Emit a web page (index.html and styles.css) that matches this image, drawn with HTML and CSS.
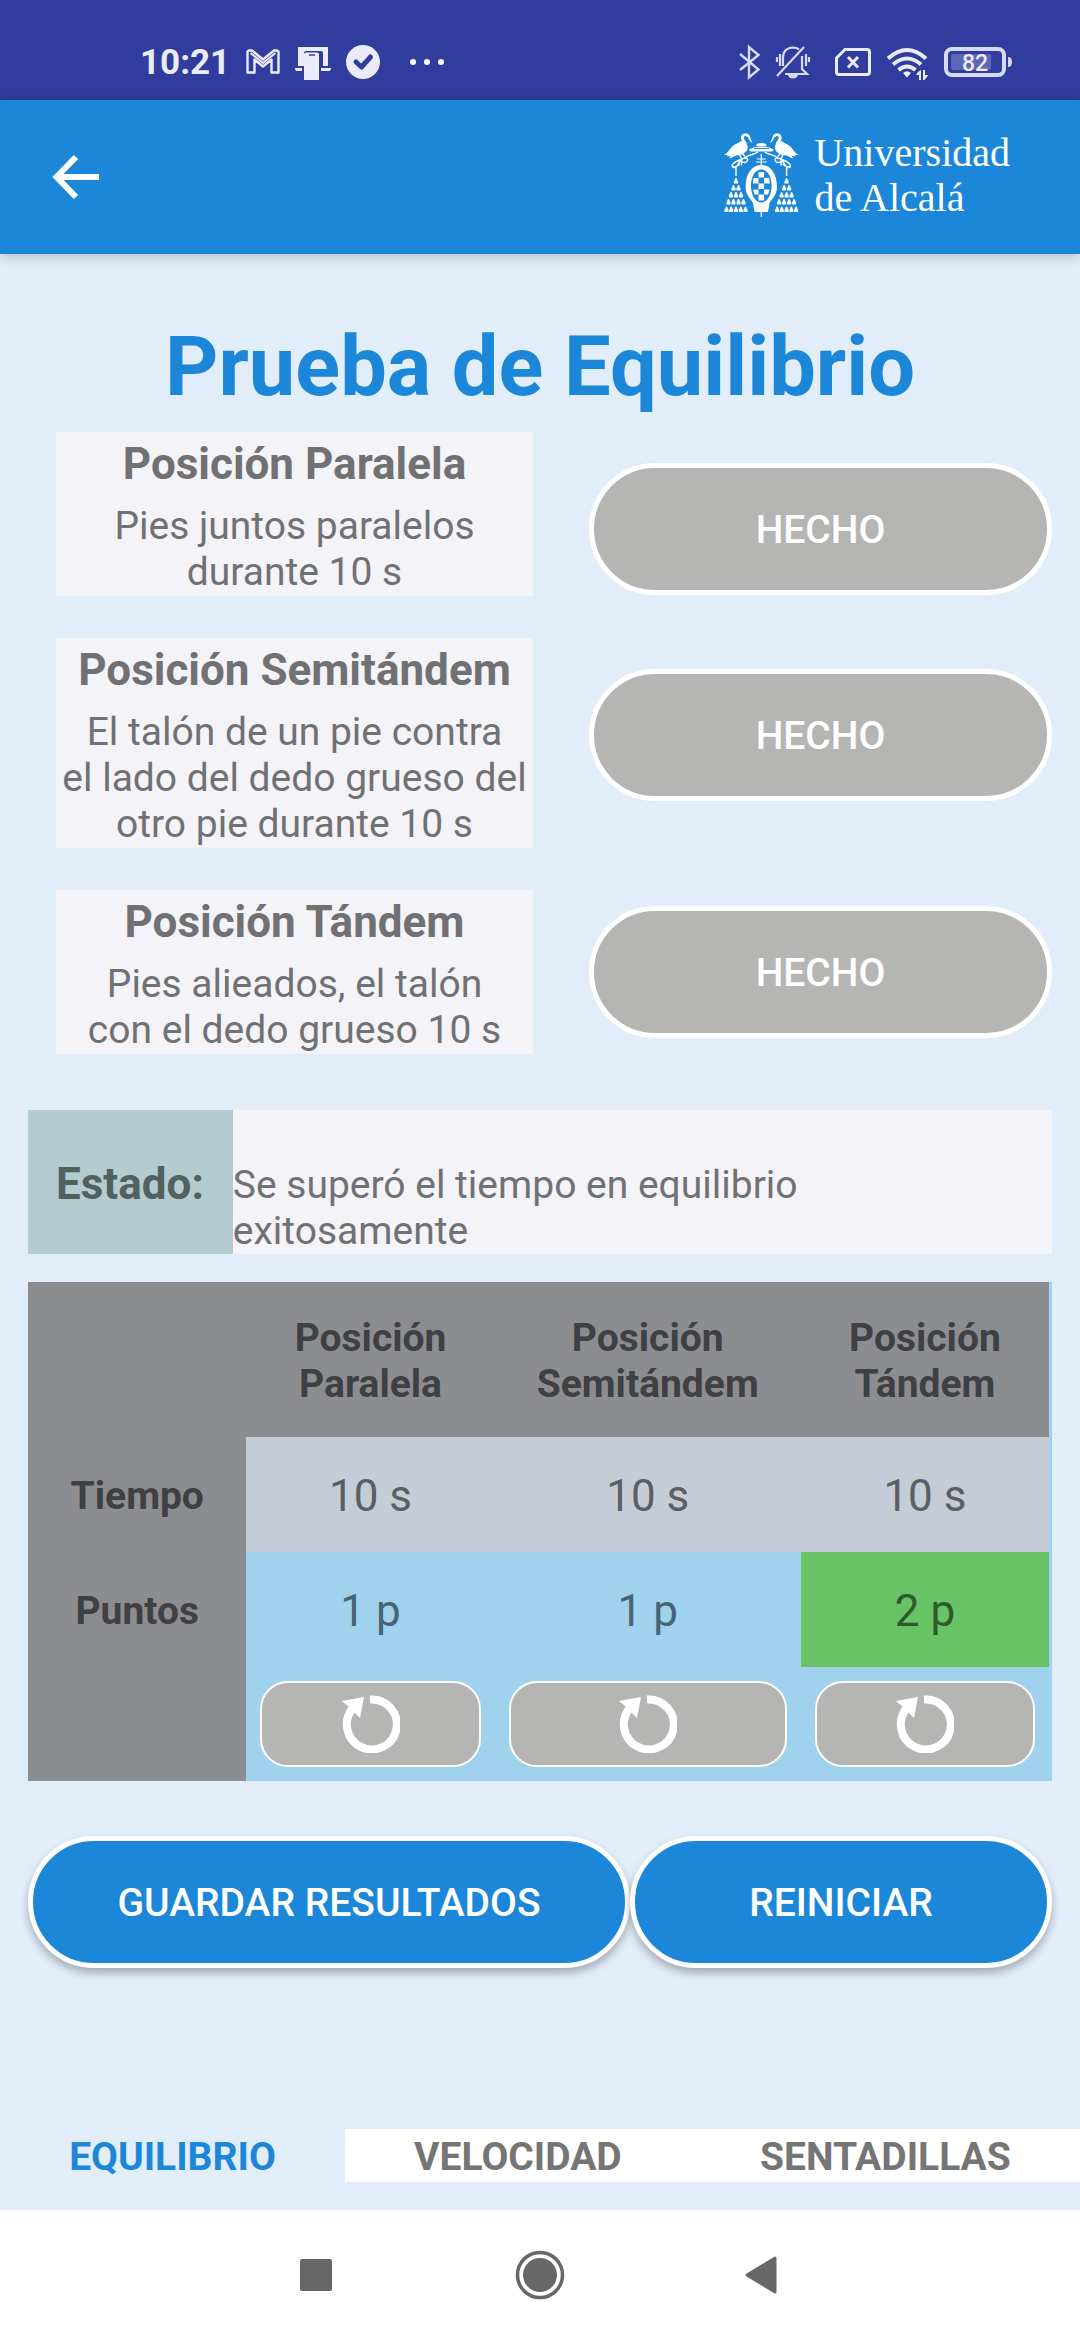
FILE: index.html
```html
<!DOCTYPE html>
<html lang="es">
<head>
<meta charset="utf-8">
<meta name="viewport" content="width=device-width, initial-scale=1">
<title>Prueba de Equilibrio</title>
<link rel="stylesheet" href="styles.css">
</head>
<body>
<svg width="0" height="0" class="defs" aria-hidden="true">
  <defs>
    <g id="tassel"><path d="M0 0c1 0 1 1.500 1.300 2.300c.9.300 1 2.700.6 3.200h-3.800c-.4-.5-.3-2.900.6-3.200C-1 1.500-1 0 0 0z"/></g>
    <g id="crest-half">
      <path d="M1.800 25c4-1.500 5-5 8.500-8.500c3-3 6.500-3.500 9-5.500c2.500 1 5.500 2 6.500 5.500c.3 3.500-2.500 6.500-6 8c-2.500 1-5 .5-7.500 1.800c-1.800 1-2.800 1.700-4.800 2.200l1.300-2.700c-2 .8-3 .5-4 .5l1-1.200z"/>
      <path d="M24 14c-2-2.500-4.500-4-3.500-7.300c1-2.700 5-2.700 6-.2" fill="none" stroke="#fff" stroke-width="2.800"/>
      <path d="M25 4.500c2 0 3 1.500 3.300 3.300l2.200 5.200c-2-1-4-3.500-4.600-6.500z"/>
      <path d="M17 24l2.500 4.500v7M20 23l3 3.500M14 46V36M36 22c-5 3-7 2-12 5s-9 3.500-12 6s-2 5 .5 4.500s3.500-3 4.500-5s4-5 7-4.500s1.500 4-1 4.500s-5-2.500-7.500-1.500M18 34c-2 1-4 4-7 2.500" fill="none" stroke="#fff" stroke-width="1.400"/>
      <use href="#tassel" x="14" y="48"/>
      <use href="#tassel" x="11.500" y="55"/><use href="#tassel" x="16.500" y="55"/>
      <use href="#tassel" x="9" y="62"/><use href="#tassel" x="14" y="62"/><use href="#tassel" x="19" y="62"/>
      <use href="#tassel" x="6.500" y="69"/><use href="#tassel" x="11.500" y="69"/><use href="#tassel" x="16.500" y="69"/><use href="#tassel" x="21.500" y="69"/>
      <use href="#tassel" x="4.500" y="76.500"/><use href="#tassel" x="9.200" y="76.500"/><use href="#tassel" x="14" y="76.500"/><use href="#tassel" x="18.800" y="76.500"/><use href="#tassel" x="23.500" y="76.500"/>
    </g>
    <symbol id="redo" viewBox="0 0 58 58">
      <path d="M28 4.500A25 25 0 1 1 11 13" fill="none" stroke="#fff" stroke-width="8"/>
      <path d="M0 6L22 2L18 23L12 17L5 20L7 12z" fill="#fff"/>
    </symbol>
  </defs>
</svg>

<div class="screen">
  <div class="status">
    <span class="clock">10:21</span>
    <svg class="status-left" viewBox="244 43 202 38" width="202" height="38" aria-hidden="true">
      <path d="M249 50.500h3l11 9l11-9h3l1.500 1v21h-7V59.500l-8.500 7l-8.500-7v13h-7v-21z" fill="none" stroke="#ecebfa" stroke-width="2.400" stroke-linejoin="round"/>
      <path d="M250.500 53l12.500 10l12.500-10" fill="none" stroke="#ecebfa" stroke-width="2"/>
      <path d="M298 47h30v19h-5V53q0-2-2-2h-15q-2 0-2 2v13h-6zM295 68h7v3h-5q-2 0-2-3zM321 68h10q0 3-2 3h-8zM304 54q0-1.500 2-1.500h11q2 0 2 1.500v26h-15z" fill="#ecebfa"/>
      <path d="M309 55h6" stroke="#303d9e" stroke-width="1.500"/>
      <circle cx="363" cy="62" r="17" fill="#ecebfa"/>
      <path d="M356 62l5.500 5l9-10" fill="none" stroke="#303d9e" stroke-width="5" stroke-linecap="round" stroke-linejoin="round"/>
      <g fill="#fff"><circle cx="413" cy="62" r="3"/><circle cx="427" cy="62" r="3"/><circle cx="441" cy="62" r="3"/></g>
    </svg>
    <svg class="status-right" viewBox="738 43 276 38" width="276" height="38" role="img" aria-label="Batería 82">
      <path d="M740 54l18.500 15.500l-9.500 8V47l9.500 8L740 70" fill="none" stroke="#d8daf4" stroke-width="2.400"/>
      <g fill="none" stroke="#d8daf4" stroke-width="2.200">
        <path d="M783 66V58q0-10 10-10.500q4 0 6 2M802 56v13l5 5h-22M777 76l27-29M780 54v12M777 57v5M806 54v12M809 57v5"/>
      </g>
      <path d="M788 75h10q-1 3.500-5 3.500t-5-3.500z" fill="#d8daf4"/>
      <path d="M845 49.500h22q2.500 0 2.500 2.500v20q0 2.500-2.500 2.500h-28q-2.500 0-2.500-2.500V58zM848 57l10 10.500M858 57l-10 10.500" fill="none" stroke="#ecebfa" stroke-width="3"/>
      <path d="M888 58.500q19-17 38 0M893 64.500q14-12 28 0M898.500 70q8.500-7 17 0" fill="none" stroke="#ecebfa" stroke-width="4"/>
      <path d="M907 77.500l-4-4.500q4-3.500 8 0zM918 72l3-2v10h-2v-5h-3zM923 70h2v5h3.500l-4 5H923z" fill="#ecebfa"/>
      <rect x="946" y="49" width="58" height="26" rx="6" fill="none" stroke="#d8daf4" stroke-width="4"/>
      <rect x="951" y="54" width="40" height="16" rx="2" fill="#5c66b4"/>
      <path d="M1008 57q4 0 4 5t-4 5z" fill="#d8daf4"/>
      <text x="975" y="71" text-anchor="middle" class="battery-text">82</text>
    </svg>
  </div>

  <header class="appbar">
    <button class="back" aria-label="Volver">
      <svg viewBox="0 0 48 48" width="48" height="48"><path d="M47 24H6M24 4L4.500 24L24 44" fill="none" stroke="#fff" stroke-width="6"/></svg>
    </button>
    <div class="brand">
      <svg viewBox="0 0 80 90" width="80" height="90" fill="#fff" aria-hidden="true">
        <use href="#crest-half"/>
        <use href="#crest-half" transform="translate(78.600 0) scale(-1 1)"/>
        <path d="M34 16q0-3 5.300-3t5.300 3zM27 19.500q5-3 12.300-3t12.300 3q0 2-3 2H30q-3 0-3-2z"/>
        <path d="M32 18.500h15" stroke="#1c87d9" stroke-width="1"/>
        <path d="M39.300 24v12M35 29h8.600M34 32h10.600M39.300 80v7" stroke="#fff" stroke-width="1.200"/>
        <path fill-rule="evenodd" d="M39.300 35C49 35 55 44 55 57c0 9-6 12-7.500 16.500L46 82H32.600l-1.500-8.500C29.600 69 23.600 66 23.600 57c0-13 6-22 15.700-22zm0 4.500c-6 0-10.300 6.500-10.300 16.500s5 16.500 10.300 16.500S49.600 66 49.600 56s-4.300-16.500-10.300-16.500z"/>
        <path d="M36.500 42h5.600v5.500h-5.600zM36.500 53.500h5.600V59h-5.600zM36.500 64.500h5.600v6h-5.600zM31.500 48h5v5.500h-5.700zM42.100 48h5l.8 5.500h-5.800zM31 59.500h5.500v5h-4zM42.100 59.500h5.500l-1.500 5h-4z"/>
      </svg>
      <span class="brand-name">Universidad<br>de Alcalá</span>
    </div>
  </header>

  <main class="content">
    <h1>Prueba de Equilibrio</h1>

    <div class="tests">
      <section class="test">
        <div class="card"><h2>Posición Paralela</h2><p>Pies juntos paralelos<br>durante 10 s</p></div>
        <button class="pill done">HECHO</button>
      </section>
      <section class="test">
        <div class="card"><h2>Posición Semitándem</h2><p>El talón de un pie contra<br>el lado del dedo grueso del<br>otro pie durante 10 s</p></div>
        <button class="pill done">HECHO</button>
      </section>
      <section class="test centered">
        <div class="card"><h2>Posición Tándem</h2><p>Pies alieados, el talón<br>con el dedo grueso 10 s</p></div>
        <button class="pill done">HECHO</button>
      </section>
    </div>

    <div class="state">
      <strong class="state-label">Estado:</strong>
      <p class="state-text">Se superó el tiempo en equilibrio<br>exitosamente</p>
    </div>

    <table class="results">
      <colgroup><col class="col-label"><col class="col-side"><col class="col-mid"><col class="col-side"></colgroup>
      <thead>
        <tr><td></td><th scope="col">Posición<br>Paralela</th><th scope="col">Posición<br>Semitándem</th><th scope="col">Posición<br>Tándem</th></tr>
      </thead>
      <tbody>
        <tr class="time"><th scope="row">Tiempo</th><td>10 s</td><td>10 s</td><td>10 s</td></tr>
        <tr class="points"><th scope="row">Puntos</th><td>1 p</td><td>1 p</td><td class="best">2 p</td></tr>
        <tr class="actions">
          <th></th>
          <td><button class="redo" aria-label="Repetir Posición Paralela"><svg width="58" height="58"><use href="#redo"/></svg></button></td>
          <td><button class="redo" aria-label="Repetir Posición Semitándem"><svg width="58" height="58"><use href="#redo"/></svg></button></td>
          <td><button class="redo" aria-label="Repetir Posición Tándem"><svg width="58" height="58"><use href="#redo"/></svg></button></td>
        </tr>
      </tbody>
    </table>

    <div class="main-actions">
      <button class="pill primary save">GUARDAR RESULTADOS</button>
      <button class="pill primary reset">REINICIAR</button>
    </div>
  </main>

  <nav class="tabs">
    <a class="tab active" href="#equilibrio" aria-current="page">EQUILIBRIO</a>
    <a class="tab" href="#velocidad">VELOCIDAD</a>
    <a class="tab" href="#sentadillas">SENTADILLAS</a>
  </nav>

  <div class="sysnav">
    <button aria-label="Recientes"><svg width="50" height="50"><rect x="9" y="9" width="32" height="32" rx="2" fill="#676767"/></svg></button>
    <button aria-label="Inicio"><svg width="50" height="50"><circle cx="25" cy="25" r="17" fill="#676767"/><circle cx="25" cy="25" r="22.500" fill="none" stroke="#676767" stroke-width="3.500"/></svg></button>
    <button aria-label="Atrás"><svg width="50" height="50"><path d="M8 25L36 8v34z" fill="#676767" stroke="#676767" stroke-width="3" stroke-linejoin="round"/></svg></button>
  </div>
</div>
</body>
</html>
```
FILE: styles.css
```css
* { box-sizing: border-box; }

body {
  margin: 0;
  background: #e1edf9;
  color: #717173;
  font-family: Roboto, "Liberation Sans", sans-serif;
  font-size: 39px;
  line-height: 46px;
}

h1, h2, p { margin: 0; }
button { font: inherit; padding: 0; border: 0; background: none; cursor: pointer; }
svg { display: block; }
.defs { position: absolute; }

.screen { display: flex; flex-direction: column; min-height: 100vh; }

/* Status bar */
.status {
  display: flex;
  align-items: center;
  height: 100px;
  padding: 24px 66px 0 140px;
  background: #303d9e;
}
.clock { padding-top: 2px; color: #ecebfa; font-size: 35px; font-weight: 700; }
.status-left { margin-left: 14px; }
.status-right { margin-left: auto; }
.battery-text { fill: #ecebfa; font-size: 23px; font-weight: 500; }

/* App bar */
.appbar {
  position: relative;
  display: flex;
  align-items: center;
  justify-content: space-between;
  height: 154px;
  padding: 0 70px 0 52px;
  background: #1c87d9;
  box-shadow: 0 2px 12px rgba(0, 0, 0, .22);
}
.brand { display: flex; align-items: center; gap: 12px; padding-bottom: 4px; }
.brand-name {
  color: #fff;
  font-family: "Liberation Serif", serif;
  font-size: 40px;
  line-height: 45px;
}

/* Content */
.content { flex: 1; padding: 65px 28px 28px; }
h1 {
  margin-bottom: 17px;
  color: #1c87d9;
  font-size: 83px;
  line-height: 96px;
  text-align: center;
}

.tests { display: grid; gap: 42px; padding-left: 28px; }
.test {
  display: grid;
  grid-template-columns: 477fr 463fr;
  gap: 56px;
  align-items: start;
}
.card { padding: 6px 0 1px; background: #f3f3f8; text-align: center; white-space: nowrap; }
h2 { margin-bottom: 13px; font-size: 44px; line-height: 52px; }

.pill {
  height: 132px;
  padding-top: 2px;
  border: 5px solid #fff;
  border-radius: 66px;
  color: #fff;
  font-weight: 500;
}
.done { margin-top: 31px; background: #b5b5b3; }
.centered { align-items: center; }
.centered .done { margin-top: 0; }

.state { display: flex; min-height: 144px; margin-top: 56px; background: #f3f3f8; }
.state-label {
  display: flex;
  align-items: center;
  padding: 4px 29px 0 28px;
  background: #b4cccf;
  color: #52605f;
  font-size: 44px;
}
.state-text { align-self: flex-end; }

/* Results table */
.results {
  width: 100%;
  margin-top: 28px;
  border-collapse: separate;
  border-spacing: 0;
  border-right: 3px solid #a0d2ee;
  table-layout: fixed;
  background: #a0d2ee;
  text-align: center;
}
.col-label { width: 21.400%; }
.col-side { width: 24.300%; }
.col-mid { width: 30%; }
.results th, .results td { padding: 3px 0 0; }
.results th, .results thead td { background: #8c8d91; color: #3f4042; }
.results thead th { height: 155px; }
.results tbody td { height: 115px; font-size: 44px; }
.time td { background: #c5ccd8; color: #5b5e63; }
.points td { color: #476473; }
.points .best { background: #68c366; color: #2d592b; }
.results .actions td { height: 114px; padding: 0 14px; }
.redo {
  display: flex;
  align-items: center;
  justify-content: center;
  width: 100%;
  height: 86px;
  border: 2px solid #fff;
  border-radius: 28px;
  background: #b5b5b3;
}

.main-actions { display: flex; margin-top: 55px; }
.primary {
  background: #1c87d9;
  box-shadow: 0 5px 8px rgba(0, 0, 0, .28);
}
.save { flex: 592; }
.reset { flex: 412; }

/* Bottom tabs */
.tabs { display: flex; margin-bottom: 28px; background: #fff; }
.tab {
  flex: auto;
  padding: 5px 56px 2px;
  color: #757575;
  font-weight: 700;
  text-align: center;
  text-decoration: none;
}
.tab.active { background: #e1edf9; color: #1c87d9; }

/* System navigation */
.sysnav {
  display: flex;
  align-items: center;
  justify-content: center;
  gap: 174px;
  height: 130px;
  background: #fff;
}
```
